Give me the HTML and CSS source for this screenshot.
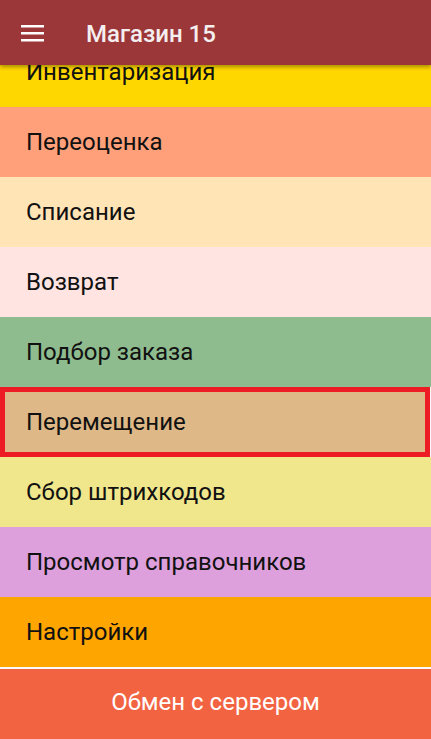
FILE: index.html
```html
<!DOCTYPE html>
<html lang="ru">
<head>
  <meta charset="UTF-8">
  <meta name="viewport" content="width=device-width, initial-scale=1.0">
  <title>Магазин 15</title>
  <link rel="stylesheet" href="styles.css">
</head>
<body>
  <div class="app">
    <header class="toolbar">
      <svg class="menu-icon" width="24" height="18" viewBox="0 0 24 18">
        <rect x="0" y="0" width="23" height="2.5" fill="#fff"/>
        <rect x="0" y="7" width="23" height="2.5" fill="#fff"/>
        <rect x="0" y="14" width="23" height="2.5" fill="#fff"/>
      </svg>
      <h1 class="title">Магазин 15</h1>
    </header>

    <!-- Menu list, scrolled a little -->
    <div class="menu">
      <div class="menu-list">
        <div class="item inventory">Инвентаризация</div>
        <div class="item reprice">Переоценка</div>
        <div class="item writeoff">Списание</div>
        <div class="item return">Возврат</div>
        <div class="item picking">Подбор заказа</div>
        <div class="item transfer selected">Перемещение</div>
        <div class="item barcodes">Сбор штрихкодов</div>
        <div class="item refs">Просмотр справочников</div>
        <div class="item settings">Настройки</div>
      </div>
    </div>

    <button class="exchange">Обмен с сервером</button>
  </div>
</body>
</html>
```

FILE: styles.css
```css
* {
  box-sizing: border-box;
}

body {
  margin: 0;
  padding: 0;
  font-family: Roboto, 'Noto Sans', sans-serif;
  background: #fafafa;
}

.app {
  display: flex;
  flex-direction: column;
  height: 739px;
  overflow: hidden;
}

.toolbar {
  position: relative;
  z-index: 2;
  flex: 0 0 65px;
  display: flex;
  align-items: center;
  padding-top: 5px;
  background: #9b3739;
  color: #fff;
  box-shadow: 0 2px 4px rgba(0, 0, 0, 0.35);
}

.menu-icon {
  margin-left: 21px;
  margin-top: -2px;
}

.title {
  margin: 0 0 2px 41px;
  font-size: 24px;
  font-weight: 500;
  color: #f5eeee;
}

.menu {
  flex: 1;
  overflow: hidden;
}

.menu-list {
  margin-top: -28px;
}

.item {
  height: 70px;
  display: flex;
  align-items: center;
  padding: 0 0 1px 26px;
  font-size: 24px;
  color: #111;
}

.inventory { background: #ffd700; }
.reprice { background: #ffa07a; }
.writeoff { background: #ffe4b5; }
.return { background: #ffe4e1; }
.picking { background: #8fbc8f; }
.transfer { background: #deb887; }
.barcodes { background: #f0e68c; }
.refs { background: #dda0dd; }
.settings { background: #ffa500; }

.selected {
  border: 5px solid #ed1c24;
  margin-right: 1px;
  padding-left: 21px;
}

.exchange {
  flex: 0 0 70px;
  border: none;
  background: #f26342;
  color: #fff;
  font-family: Roboto, 'Noto Sans', sans-serif;
  font-size: 24px;
  padding: 0 0 4px;
  width: 100%;
}
```
